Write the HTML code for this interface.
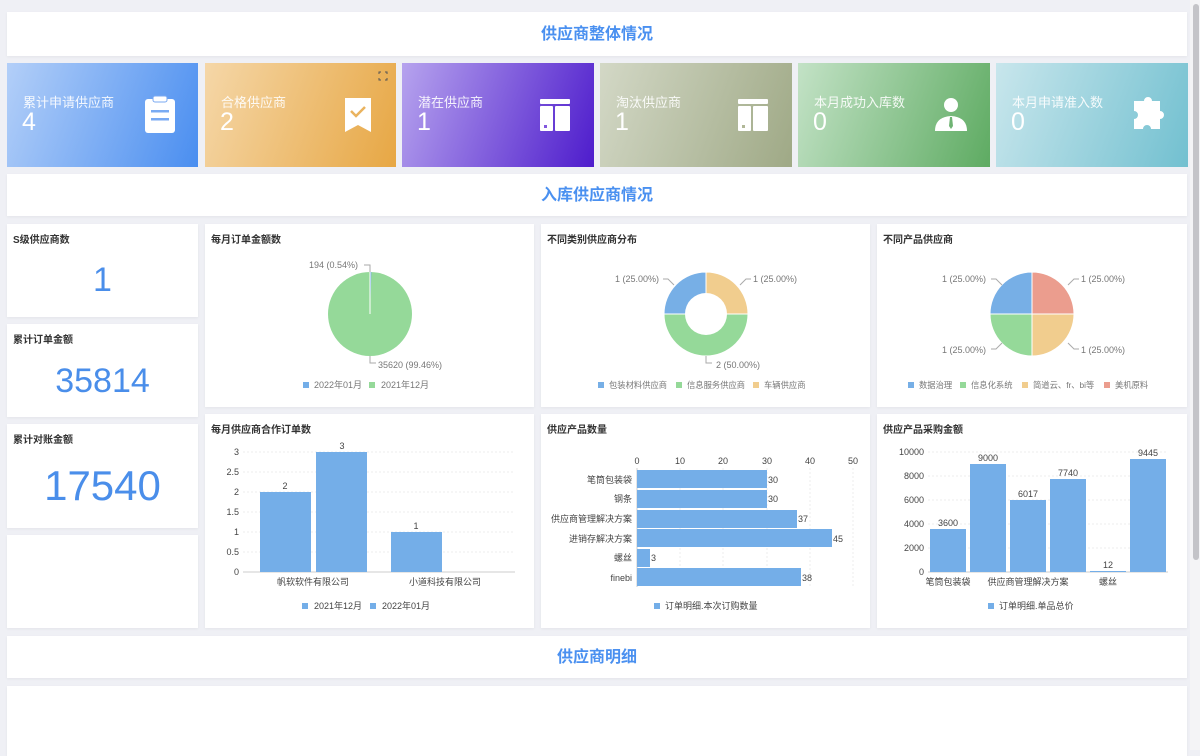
<!DOCTYPE html>
<html><head><meta charset="utf-8">
<style>
*{margin:0;padding:0;box-sizing:border-box}
body{width:1200px;height:750px;overflow:hidden;background:#eff0f5;font-family:"Liberation Sans","Noto Sans CJK SC",sans-serif;position:relative}
.p{position:absolute;background:#fff;box-shadow:0 1px 3px rgba(0,0,0,0.05)}
.sec{display:flex;align-items:center;justify-content:center;color:#4a90f0;font-size:16px;font-weight:bold}
.k{position:absolute;top:63px;height:104px;color:#fff}
.k .t{position:absolute;left:16px;top:29px;font-size:13px;opacity:.9}
.k .n{position:absolute;left:15px;top:45px;font-size:25px;font-weight:300}
.ct{position:absolute;left:6px;top:7px;font-size:10px;font-weight:bold;color:#333}
.big{position:absolute;left:0;right:0;text-align:center;color:#4a8eea;font-weight:300}
</style></head><body>
<div class="p sec" style="left:7px;top:12px;width:1180px;height:44px;padding-bottom:4px">供应商整体情况</div>

<div class="k" style="left:7px;width:191px;background:linear-gradient(110deg,#b3cff8,#4a8ef0)"><div class="t">累计申请供应商</div><div class="n">4</div></div>
<div class="k" style="left:205px;width:191px;background:linear-gradient(110deg,#f5d7a8,#e7a744)"><div class="t">合格供应商</div><div class="n">2</div></div>
<div class="k" style="left:402px;width:192px;background:linear-gradient(110deg,#b6a3ee,#4e1ccc)"><div class="t">潜在供应商</div><div class="n">1</div></div>
<div class="k" style="left:600px;width:192px;background:linear-gradient(110deg,#d3d8c6,#9fa986)"><div class="t">淘汰供应商</div><div class="n">1</div></div>
<div class="k" style="left:798px;width:192px;background:linear-gradient(110deg,#c3e2c6,#5eab62)"><div class="t">本月成功入库数</div><div class="n">0</div></div>
<div class="k" style="left:996px;width:192px;background:linear-gradient(110deg,#c8e6ec,#72c0d0)"><div class="t">本月申请准入数</div><div class="n">0</div></div>

<div class="p sec" style="left:7px;top:174px;width:1180px;height:42px;padding-bottom:4px">入库供应商情况</div>

<div class="p" style="left:7px;top:224px;width:191px;height:93px"><div class="ct">S级供应商数</div><div class="big" style="top:37px;font-size:34px">1</div></div>
<div class="p" style="left:7px;top:324px;width:191px;height:93px"><div class="ct">累计订单金额</div><div class="big" style="top:38px;font-size:34px">35814</div></div>
<div class="p" style="left:7px;top:424px;width:191px;height:104px"><div class="ct">累计对账金额</div><div class="big" style="top:38px;font-size:42px">17540</div></div>
<div class="p" style="left:7px;top:535px;width:191px;height:93px"></div>

<div class="p" style="left:205px;top:224px;width:329px;height:183px"><div class="ct">每月订单金额数</div></div>
<div class="p" style="left:541px;top:224px;width:329px;height:183px"><div class="ct">不同类别供应商分布</div></div>
<div class="p" style="left:877px;top:224px;width:310px;height:183px"><div class="ct">不同产品供应商</div></div>
<div class="p" style="left:205px;top:414px;width:329px;height:214px"><div class="ct">每月供应商合作订单数</div></div>
<div class="p" style="left:541px;top:414px;width:329px;height:214px"><div class="ct">供应产品数量</div></div>
<div class="p" style="left:877px;top:414px;width:310px;height:214px"><div class="ct">供应产品采购金额</div></div>

<div class="p sec" style="left:7px;top:636px;width:1180px;height:42px;padding-bottom:4px">供应商明细</div>
<div class="p" style="left:7px;top:686px;width:1180px;height:70px"></div>

<div style="position:absolute;left:1190px;top:0;width:10px;height:750px;background:#f4f4f6"></div>
<div style="position:absolute;left:1193px;top:4px;width:6px;height:556px;border-radius:3px;background:#c4c4c8"></div>

<svg width="1200" height="750" style="position:absolute;left:0;top:0" font-family="Liberation Sans, Noto Sans CJK SC, sans-serif">
<g fill="#fff">
<rect x="145" y="99" width="30" height="34" rx="3"/>
<rect x="153" y="96" width="14" height="6" rx="2" fill="#fff" stroke="#7aa9f2" stroke-width="1"/>
<rect x="151" y="110" width="18" height="2.5" fill="#7aabf3"/><rect x="151" y="118" width="18" height="2.5" fill="#79aaf3"/>
<path d="M345 98h26v34l-13-7l-13 7z"/>
<path d="M351 111l5 5l9-9" stroke="#eab35f" stroke-width="2.5" fill="none"/>
<rect x="540" y="99" width="30" height="5" rx="1"/><rect x="540" y="106" width="13" height="25" rx="1"/><rect x="555" y="106" width="15" height="25" rx="1"/>
<rect x="544" y="125" width="3" height="3" fill="#8258de"/>
<rect x="738" y="99" width="30" height="5" rx="1"/><rect x="738" y="106" width="13" height="25" rx="1"/><rect x="753" y="106" width="15" height="25" rx="1"/>
<rect x="742" y="125" width="3" height="3" fill="#b1b898"/>
<circle cx="951" cy="105" r="7"/><path d="M935 131q0-14 16-15q16 1 16 15z"/>
<path d="M950 117h2l1 9l-2 3l-2-3z" fill="#6fb373"/>
<path d="M1134 101h10a4 4 0 0 1 8 0h8v10a4 4 0 0 1 0 8v10h-9a4 4 0 0 0-8 0h-9v-10a4 4 0 0 0 0-8z"/>
</g>
<g stroke="#555" stroke-width="1" fill="none"><path d="M379 74v-2h2M385 72h2v2M387 78v2h-2M381 80h-2v-2"/></g>

<circle cx="370" cy="314" r="42" fill="#95d999"/>
<path d="M370 314L370 272A42 42 0 0 1 371.4 272z" fill="#74aee8"/>
<line x1="370" y1="314" x2="370" y2="272" stroke="#fff" stroke-width="1"/>
<path d="M364 265h6v7M370 356v7h6" stroke="#aaa" fill="none"/>
<g font-size="9" fill="#777"><text x="309" y="268">194 (0.54%)</text><text x="378" y="368">35620 (99.46%)</text>
<rect x="303" y="382" width="6" height="6" fill="#74aee8"/><text x="314" y="388">2022年01月</text>
<rect x="369" y="382" width="6" height="6" fill="#95d999"/><text x="381" y="388">2021年12月</text></g>

<g stroke="#fff" stroke-width="1">
<path d="M706 314L706 272A42 42 0 0 0 664 314z" fill="#77afe6"/>
<path d="M706 314L706 272A42 42 0 0 1 748 314z" fill="#f1cd8e"/>
<path d="M664 314A42 42 0 0 0 748 314z" fill="#95d999"/>
</g>
<circle cx="706" cy="314" r="21" fill="#fff"/>
<path d="M663 279h5l6 6M740 285l6-6h5M706 356v7h6" stroke="#aaa" fill="none"/>
<g font-size="9" fill="#777"><text x="615" y="282">1 (25.00%)</text><text x="753" y="282">1 (25.00%)</text><text x="716" y="368">2 (50.00%)</text></g>
<g font-size="8.3" fill="#777">
<rect x="598" y="382" width="6" height="6" fill="#77afe6"/><text x="609" y="388">包装材料供应商</text>
<rect x="676" y="382" width="6" height="6" fill="#95d999"/><text x="687" y="388">信息服务供应商</text>
<rect x="753" y="382" width="6" height="6" fill="#f1cd8e"/><text x="764" y="388">车辆供应商</text></g>

<g stroke="#fff" stroke-width="1">
<path d="M1032 314V272A42 42 0 0 0 990 314z" fill="#77afe6"/>
<path d="M1032 314V272A42 42 0 0 1 1074 314z" fill="#eb9d8e"/>
<path d="M1032 314H1074A42 42 0 0 1 1032 356z" fill="#f1cd8e"/>
<path d="M1032 314V356A42 42 0 0 1 990 314z" fill="#95d999"/>
</g>
<path d="M991 279h5l6 6M1068 285l6-6h5M991 349h5l6-6M1068 343l6 6h5" stroke="#aaa" fill="none"/>
<g font-size="9" fill="#777"><text x="942" y="282">1 (25.00%)</text><text x="1081" y="282">1 (25.00%)</text><text x="942" y="353">1 (25.00%)</text><text x="1081" y="353">1 (25.00%)</text></g>
<g font-size="8.3" fill="#777">
<rect x="908" y="382" width="6" height="6" fill="#77afe6"/><text x="919" y="388">数据治理</text>
<rect x="960" y="382" width="6" height="6" fill="#95d999"/><text x="971" y="388">信息化系统</text>
<rect x="1022" y="382" width="6" height="6" fill="#f1cd8e"/><text x="1033" y="388">简道云、fr、bi等</text>
<rect x="1104" y="382" width="6" height="6" fill="#eb9d8e"/><text x="1115" y="388">美机原料</text></g>

<g stroke="#eee" stroke-dasharray="2,2"><line x1="243" y1="452" x2="515" y2="452"/><line x1="243" y1="472" x2="515" y2="472"/><line x1="243" y1="492" x2="515" y2="492"/><line x1="243" y1="512" x2="515" y2="512"/><line x1="243" y1="532" x2="515" y2="532"/><line x1="243" y1="552" x2="515" y2="552"/></g>
<line x1="243" y1="572" x2="515" y2="572" stroke="#ccc"/>
<g fill="#74aee8"><rect x="260" y="492" width="51" height="80"/><rect x="316" y="452" width="51" height="120"/><rect x="391" y="532" width="51" height="40"/></g>
<g font-size="9" fill="#444" text-anchor="end"><text x="239" y="455">3</text><text x="239" y="475">2.5</text><text x="239" y="495">2</text><text x="239" y="515">1.5</text><text x="239" y="535">1</text><text x="239" y="555">0.5</text><text x="239" y="575">0</text></g>
<g font-size="9" fill="#444" text-anchor="middle"><text x="285" y="489">2</text><text x="342" y="449">3</text><text x="416" y="529">1</text>
<text x="313" y="585">帆软软件有限公司</text><text x="445" y="585">小道科技有限公司</text></g>
<g font-size="9" fill="#444"><rect x="302" y="603" width="6" height="6" fill="#74aee8"/><text x="314" y="609">2021年12月</text><rect x="370" y="603" width="6" height="6" fill="#74aee8"/><text x="382" y="609">2022年01月</text></g>

<g stroke="#eee" stroke-dasharray="2,2"><line x1="680" y1="468" x2="680" y2="587"/><line x1="723" y1="468" x2="723" y2="587"/><line x1="767" y1="468" x2="767" y2="587"/><line x1="810" y1="468" x2="810" y2="587"/><line x1="853" y1="468" x2="853" y2="587"/></g>
<line x1="637" y1="468" x2="637" y2="587" stroke="#ccc"/>
<g fill="#74aee8"><rect x="637" y="470" width="130" height="18"/><rect x="637" y="490" width="130" height="18"/><rect x="637" y="510" width="160" height="18"/><rect x="637" y="529" width="195" height="18"/><rect x="637" y="549" width="13" height="18"/><rect x="637" y="568" width="164" height="18"/></g>
<g font-size="9" fill="#444" text-anchor="middle"><text x="637" y="464">0</text><text x="680" y="464">10</text><text x="723" y="464">20</text><text x="767" y="464">30</text><text x="810" y="464">40</text><text x="853" y="464">50</text></g>
<g font-size="9" fill="#444"><text x="768" y="483">30</text><text x="768" y="502">30</text><text x="798" y="522">37</text><text x="833" y="542">45</text><text x="651" y="561">3</text><text x="802" y="581">38</text></g>
<g font-size="9" fill="#444" text-anchor="end"><text x="632" y="483">笔筒包装袋</text><text x="632" y="502">钢条</text><text x="632" y="522">供应商管理解决方案</text><text x="632" y="542">进销存解决方案</text><text x="632" y="561">螺丝</text><text x="632" y="581">finebi</text></g>
<g font-size="9" fill="#444"><rect x="654" y="603" width="6" height="6" fill="#74aee8"/><text x="665" y="609">订单明细.本次订购数量</text></g>

<g stroke="#eee" stroke-dasharray="2,2"><line x1="928" y1="452" x2="1168" y2="452"/><line x1="928" y1="476" x2="1168" y2="476"/><line x1="928" y1="500" x2="1168" y2="500"/><line x1="928" y1="524" x2="1168" y2="524"/><line x1="928" y1="548" x2="1168" y2="548"/></g>
<line x1="928" y1="572" x2="1168" y2="572" stroke="#ccc"/>
<g fill="#74aee8"><rect x="930" y="529" width="36" height="43"/><rect x="970" y="464" width="36" height="108"/><rect x="1010" y="500" width="36" height="72"/><rect x="1050" y="479" width="36" height="93"/><rect x="1090" y="571" width="36" height="1"/><rect x="1130" y="459" width="36" height="113"/></g>
<g font-size="9" fill="#444" text-anchor="end"><text x="924" y="455">10000</text><text x="924" y="479">8000</text><text x="924" y="503">6000</text><text x="924" y="527">4000</text><text x="924" y="551">2000</text><text x="924" y="575">0</text></g>
<g font-size="9" fill="#444" text-anchor="middle"><text x="948" y="526">3600</text><text x="988" y="461">9000</text><text x="1028" y="497">6017</text><text x="1068" y="476">7740</text><text x="1108" y="568">12</text><text x="1148" y="456">9445</text>
<text x="948" y="585">笔筒包装袋</text><text x="1028" y="585">供应商管理解决方案</text><text x="1108" y="585">螺丝</text></g>
<g font-size="9" fill="#444"><rect x="988" y="603" width="6" height="6" fill="#74aee8"/><text x="999" y="609">订单明细.单品总价</text></g>
</svg>
</body></html>
